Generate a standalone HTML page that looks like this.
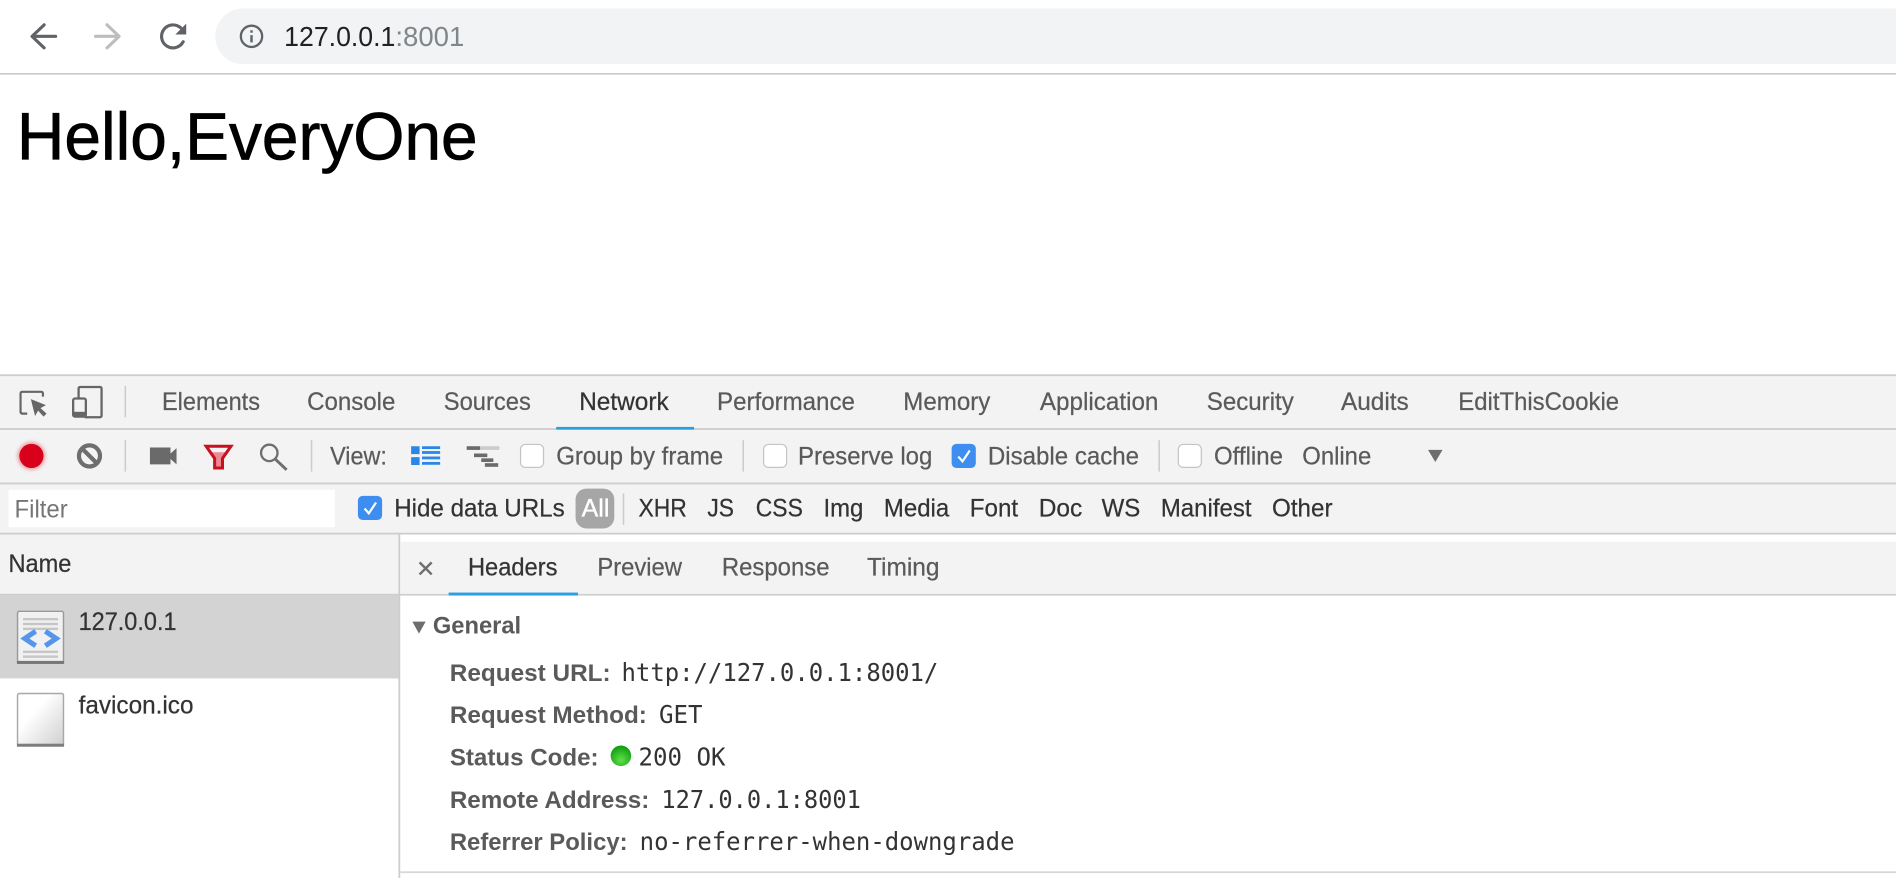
<!DOCTYPE html>
<html>
<head>
<meta charset="utf-8">
<title>127.0.0.1:8001</title>
<style>
html,body{margin:0;padding:0;background:#fff;width:1896px;height:878px;overflow:hidden}
svg{display:block}
text{font-family:"Liberation Sans",Arial,sans-serif}
.t{font-size:20.5px;fill:#5a5a5a;stroke:#5a5a5a;stroke-width:.2px}
.d{font-size:20.5px;fill:#333;stroke:#333;stroke-width:.2px}
.b{font-size:20px;font-weight:bold;fill:#5a5a5a}
.m{font-family:"DejaVu Sans Mono",monospace;font-size:20.5px;fill:#333}
</style>
</head>
<body>
<svg width="1896" height="878" viewBox="0 0 1568 726" xmlns="http://www.w3.org/2000/svg">
<defs>
<filter id="blur" x="-50%" y="-50%" width="200%" height="200%"><feGaussianBlur stdDeviation="1.600"/></filter>
<linearGradient id="g" x1="0" y1="0" x2="1" y2="1"><stop offset=".35" stop-color="#fff"/><stop offset="1" stop-color="#cfcfcf"/></linearGradient>
<radialGradient id="s" cx=".5" cy=".7" r=".7"><stop offset="0" stop-color="#5fe04a"/><stop offset="1" stop-color="#0c9a0c"/></radialGradient>
</defs>
<rect width="1568" height="726" fill="#fff"/>
<!-- browser bar -->
<g fill="none" stroke-linecap="round" stroke-linejoin="round" stroke-width="2.600">
<path d="M46 30H27M36.500 20.500L26.500 30L36.500 39.500" stroke="#5f6368"/>
<path d="M79 30H98M88.500 20.500L98.500 30L88.500 39.500" stroke="#bdbdbd"/>
<path d="M151.500 34.500A9.500 9.500 0 1 1 149.500 23" stroke="#5f6368"/>
</g>
<path d="M154 19.500V28.500H145Z" fill="#5f6368"/>
<path d="M201 7H1568V53H201A23 23 0 0 1 201 7Z" fill="#f1f3f4"/>
<circle cx="208" cy="30" r="8.800" fill="none" stroke="#5f6368" stroke-width="1.900"/>
<rect x="207" y="29" width="2" height="6" fill="#5f6368"/><rect x="207" y="25" width="2" height="2" fill="#5f6368"/>
<text x="235" y="38" font-size="23" fill="#202124" textLength="92" lengthAdjust="spacingAndGlyphs">127.0.0.1</text>
<text x="327" y="38" font-size="23" fill="#80868b" textLength="57" lengthAdjust="spacingAndGlyphs">:8001</text>
<rect y="60.500" width="1568" height="1" fill="#b8b8b8"/>
<text x="14" y="132" font-size="55" fill="#000" stroke="#000" stroke-width=".6" textLength="381" lengthAdjust="spacingAndGlyphs">Hello,EveryOne</text>

<!-- devtools bars -->
<rect y="310" width="1568" height="132" fill="#f3f3f3"/>
<rect y="309.500" width="1568" height="1.500" fill="#cdcdcd"/>
<rect y="354" width="1568" height="1.500" fill="#cdcdcd"/>
<rect y="399" width="1568" height="1.500" fill="#cdcdcd"/>
<rect y="440.500" width="1568" height="1.500" fill="#cdcdcd"/>
<!-- tab bar icons -->
<path d="M22.500 342H18.500Q17 342 17 340.500V325.500Q17 324 18.500 324H34Q35.500 324 35.500 325.500V328" fill="none" stroke="#666" stroke-width="1.800"/>
<path d="M25.500 330L38 335L33.500 337.500L38.500 342L36 344.500L31.500 339.500L29 344Z" fill="#666"/>
<path d="M65 329V321.500Q65 320 66.500 320H82.500Q84 320 84 321.500V343.500Q84 345 82.500 345H70" fill="none" stroke="#666" stroke-width="1.900"/>
<rect x="60.500" y="329.500" width="10.500" height="15" rx="1.500" fill="none" stroke="#666" stroke-width="1.900"/>
<rect x="60.500" y="340.500" width="10.500" height="4" fill="#666"/>
<rect x="103" y="319" width="1.300" height="26" fill="#ccc"/>
<text class="t" x="134" y="339" textLength="81" lengthAdjust="spacingAndGlyphs">Elements</text>
<text class="t" x="254" y="339" textLength="73" lengthAdjust="spacingAndGlyphs">Console</text>
<text class="t" x="367" y="339" textLength="72" lengthAdjust="spacingAndGlyphs">Sources</text>
<text class="d" x="479" y="339" textLength="74" lengthAdjust="spacingAndGlyphs">Network</text>
<text class="t" x="593" y="339" textLength="114" lengthAdjust="spacingAndGlyphs">Performance</text>
<text class="t" x="747" y="339" textLength="72" lengthAdjust="spacingAndGlyphs">Memory</text>
<text class="t" x="860" y="339" textLength="98" lengthAdjust="spacingAndGlyphs">Application</text>
<text class="t" x="998" y="339" textLength="72" lengthAdjust="spacingAndGlyphs">Security</text>
<text class="t" x="1109" y="339" textLength="56" lengthAdjust="spacingAndGlyphs">Audits</text>
<text class="t" x="1206" y="339" textLength="133" lengthAdjust="spacingAndGlyphs">EditThisCookie</text>
<rect x="460" y="353" width="114" height="2.200" fill="#2a9fe0"/>
<!-- toolbar -->
<circle cx="26" cy="377" r="11.500" fill="#e07880" opacity=".7" filter="url(#blur)"/>
<circle cx="26" cy="377" r="10" fill="#d9001b"/>
<circle cx="74" cy="377" r="8.700" fill="none" stroke="#6e6e6e" stroke-width="3.500"/>
<path d="M67.500 370.500L80.500 383.500" stroke="#6e6e6e" stroke-width="3.500"/>
<rect x="103" y="364" width="1.300" height="26" fill="#ccc"/>
<path d="M124 370H141V375L146 370.500V384L141 379.500V384H124Z" fill="#6a6a6a"/>
<path d="M170.500 369H191L184 379V387H177.500V379Z" fill="#ea8a94"/>
<path d="M172 370H189.500L187 374H174.500Z" fill="#f3f3f3"/>
<path d="M170.500 369H191L184 379V387H177.500V379Z" fill="none" stroke="#c8101e" stroke-width="2.500"/>
<circle cx="222.700" cy="374.500" r="6.800" fill="none" stroke="#6e6e6e" stroke-width="1.900"/>
<path d="M227.500 379.500L237 388.500" stroke="#6e6e6e" stroke-width="2.400"/>
<rect x="257" y="364" width="1.300" height="26" fill="#ccc"/>
<text class="t" x="273" y="384" textLength="47" lengthAdjust="spacingAndGlyphs">View:</text>
<g fill="#2a87e8"><rect x="340" y="369" width="7" height="6.500"/><rect x="340" y="378" width="7" height="6.500"/><rect x="349" y="369" width="15" height="2.300"/><rect x="349" y="373" width="15" height="2.300"/><rect x="349" y="377.500" width="15" height="2.300"/><rect x="349" y="382" width="15" height="2.300"/></g>
<rect x="386" y="369" width="27" height="3" fill="#ccc"/><rect x="386" y="369" width="11" height="3" fill="#6a6a6a"/>
<rect x="392" y="375" width="11" height="3" fill="#6a6a6a"/><rect x="398" y="379" width="10" height="3" fill="#6a6a6a"/><rect x="401" y="383" width="11" height="3" fill="#6a6a6a"/>
<rect x="430.500" y="367.500" width="19" height="19" rx="4" fill="#fff" stroke="#c4c4c4" stroke-width="1"/>
<text class="t" x="460" y="384" textLength="138" lengthAdjust="spacingAndGlyphs">Group by frame</text>
<rect x="614" y="364" width="1.300" height="26" fill="#ccc"/>
<rect x="631.500" y="367.500" width="19" height="19" rx="4" fill="#fff" stroke="#c4c4c4" stroke-width="1"/>
<text class="t" x="660" y="384" textLength="111" lengthAdjust="spacingAndGlyphs">Preserve log</text>
<rect x="787" y="367" width="20" height="20" rx="4" fill="#3d8ef0"/>
<path d="M792.500 377.500L796 381.500L802 372.500" fill="none" stroke="#fff" stroke-width="1.800"/>
<text class="t" x="817" y="384" textLength="125" lengthAdjust="spacingAndGlyphs">Disable cache</text>
<rect x="958" y="364" width="1.300" height="26" fill="#ccc"/>
<rect x="974.500" y="367.500" width="19" height="19" rx="4" fill="#fff" stroke="#c4c4c4" stroke-width="1"/>
<text class="t" x="1004" y="384" textLength="57" lengthAdjust="spacingAndGlyphs">Offline</text>
<text class="t" x="1077" y="384" textLength="57" lengthAdjust="spacingAndGlyphs">Online</text>
<path d="M1181 372H1193L1187 382Z" fill="#6e6e6e"/>
<!-- filter row -->
<rect x="7" y="405" width="270" height="31" fill="#fff"/>
<text x="12" y="428" font-size="20.500" fill="#757575" textLength="44" lengthAdjust="spacingAndGlyphs">Filter</text>
<rect x="296" y="410" width="20" height="20" rx="4" fill="#3d8ef0"/>
<path d="M301.500 420.500L305 424.500L311 415.500" fill="none" stroke="#fff" stroke-width="1.800"/>
<text class="d" x="326" y="427" textLength="141" lengthAdjust="spacingAndGlyphs">Hide data URLs</text>
<rect x="476" y="404" width="32" height="33" rx="9" fill="#a6a6a6"/>
<text x="481" y="427" font-size="20.500" fill="#fff" stroke="#fff" stroke-width=".3" textLength="23" lengthAdjust="spacingAndGlyphs">All</text>
<rect x="515" y="408" width="1.300" height="26" fill="#ccc"/>
<text class="d" x="528" y="427" textLength="40" lengthAdjust="spacingAndGlyphs">XHR</text>
<text class="d" x="585" y="427" textLength="22" lengthAdjust="spacingAndGlyphs">JS</text>
<text class="d" x="625" y="427" textLength="39" lengthAdjust="spacingAndGlyphs">CSS</text>
<text class="d" x="681" y="427" textLength="33" lengthAdjust="spacingAndGlyphs">Img</text>
<text class="d" x="731" y="427" textLength="54" lengthAdjust="spacingAndGlyphs">Media</text>
<text class="d" x="802" y="427" textLength="40" lengthAdjust="spacingAndGlyphs">Font</text>
<text class="d" x="859" y="427" textLength="36" lengthAdjust="spacingAndGlyphs">Doc</text>
<text class="d" x="911" y="427" textLength="32" lengthAdjust="spacingAndGlyphs">WS</text>
<text class="d" x="960" y="427" textLength="75" lengthAdjust="spacingAndGlyphs">Manifest</text>
<text class="d" x="1052" y="427" textLength="50" lengthAdjust="spacingAndGlyphs">Other</text>
<!-- name column -->
<rect y="442" width="330" height="49" fill="#f3f3f3"/>
<rect y="491" width="1568" height="1.500" fill="#cdcdcd"/>
<rect y="492" width="330" height="69" fill="#d3d3d3"/>
<rect x="329.500" y="442" width="1.500" height="284" fill="#cdcdcd"/>
<text class="d" x="7" y="473" textLength="52" lengthAdjust="spacingAndGlyphs">Name</text>
<rect x="14.500" y="505.500" width="38" height="43" rx="1.500" fill="#f1f1f1" stroke="#9a9a9a" stroke-width="1.200"/>
<rect x="14" y="546.500" width="39" height="2.500" fill="#777"/>
<g fill="#c6c6c6"><rect x="19" y="511" width="29" height="2"/><rect x="19" y="515" width="29" height="2"/><rect x="19" y="519" width="29" height="2"/><rect x="19" y="538" width="29" height="2"/><rect x="19" y="542" width="29" height="2"/></g>
<path d="M29.500 522L20.500 528L29.500 534M37.500 522L46.500 528L37.500 534" fill="none" stroke="#5595ec" stroke-width="4.200"/>
<text class="d" x="65" y="521" textLength="81" lengthAdjust="spacingAndGlyphs">127.0.0.1</text>
<rect x="14.500" y="573.500" width="38" height="43" rx="1.500" fill="url(#g)" stroke="#a8a8a8" stroke-width="1.200"/>
<rect x="14" y="615" width="39" height="2.500" fill="#7d7d7d"/>
<text class="d" x="65" y="590" textLength="95" lengthAdjust="spacingAndGlyphs">favicon.ico</text>
<!-- right pane -->
<rect x="331" y="448" width="1237" height="43" fill="#f3f3f3"/>
<path d="M347 465L357 475M357 465L347 475" stroke="#6e6e6e" stroke-width="2"/>
<text class="d" x="387" y="476" textLength="74" lengthAdjust="spacingAndGlyphs">Headers</text>
<text class="t" x="494" y="476" textLength="70" lengthAdjust="spacingAndGlyphs">Preview</text>
<text class="t" x="597" y="476" textLength="89" lengthAdjust="spacingAndGlyphs">Response</text>
<text class="t" x="717" y="476" textLength="60" lengthAdjust="spacingAndGlyphs">Timing</text>
<rect x="371" y="490" width="107" height="2.400" fill="#2a9fe0"/>
<path d="M341 514H352L346.500 524Z" fill="#6e6e6e"/>
<text class="b" x="358" y="524" textLength="73" lengthAdjust="spacingAndGlyphs">General</text>
<text class="b" x="372" y="563" textLength="133" lengthAdjust="spacingAndGlyphs">Request URL:</text>
<text class="m" x="514" y="563" textLength="262" lengthAdjust="spacingAndGlyphs">http://127.0.0.1:8001/</text>
<text class="b" x="372" y="598" textLength="163" lengthAdjust="spacingAndGlyphs">Request Method:</text>
<text class="m" x="545" y="598" textLength="36" lengthAdjust="spacingAndGlyphs">GET</text>
<text class="b" x="372" y="633" textLength="123" lengthAdjust="spacingAndGlyphs">Status Code:</text>
<circle cx="513.500" cy="625" r="8.500" fill="url(#s)"/>
<text class="m" x="528" y="633" textLength="72" lengthAdjust="spacingAndGlyphs">200 OK</text>
<text class="b" x="372" y="668" textLength="165" lengthAdjust="spacingAndGlyphs">Remote Address:</text>
<text class="m" x="547" y="668" textLength="165" lengthAdjust="spacingAndGlyphs">127.0.0.1:8001</text>
<text class="b" x="372" y="703" textLength="147" lengthAdjust="spacingAndGlyphs">Referrer Policy:</text>
<text class="m" x="529" y="703" textLength="310" lengthAdjust="spacingAndGlyphs">no-referrer-when-downgrade</text>
<rect x="331" y="720.500" width="1237" height="1.500" fill="#d8d8d8"/>
</svg>
</body>
</html>
